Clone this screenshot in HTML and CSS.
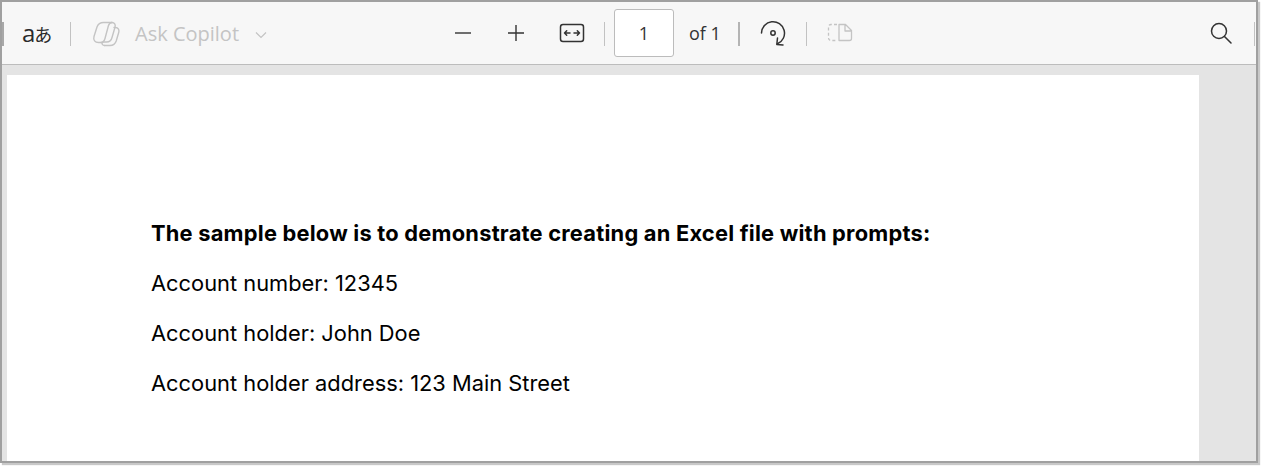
FILE: index.html
```html
<!DOCTYPE html>
<html lang="en">
<head>
<meta charset="utf-8">
<title>PDF viewer</title>
<link rel="stylesheet" href="styles.css">
</head>
<body>
<div class="frame">
  <header class="toolbar">
    <span class="edge"></span>
    <span class="translate"><span class="latin">a</span>あ</span>
    <span class="sep sep-a"></span>
    <svg class="copilot" width="28" height="26" viewBox="0 0 28 26" fill="none" stroke="#c4c4c4" stroke-width="1.4" stroke-linejoin="round" stroke-linecap="round">
      <path d="M20 1.500H11.500C8.300 1.500 6 3.200 5 6L2 15.500C1 19 3 21.500 6.500 21.500H10.500"/>
      <path d="M22 6.500H23.500C26 6.500 27.500 8.800 26.700 11.500L24.200 20C23.200 23 21 24.500 18 24.500H12.500"/>
      <path d="M20 1.500C18.500 1.500 17 2.800 16.400 4.800L13 17.500C12.300 20 10.800 21.500 9 21.500"/>
      <path d="M20 1.500C22.500 1.500 23.800 3.700 23 6.200L20 16.500C19.300 19.500 17.500 21 14.500 21H11"/>
      <path d="M12.500 24.500C10.800 24.500 9.800 23.200 10 21.500"/>
    </svg>
    <span class="ask">Ask Copilot</span>
    <svg class="chev" width="12" height="8" viewBox="0 0 12 8" fill="none" stroke="#c4c4c4" stroke-width="1.200"><path d="M1 1.500l5 5 5-5"/></svg>
    <svg class="minus" width="18" height="18" viewBox="0 0 18 18" fill="none" stroke="#333" stroke-width="1.400"><path d="M1 9h16"/></svg>
    <svg class="plus" width="18" height="18" viewBox="0 0 18 18" fill="none" stroke="#333" stroke-width="1.400"><path d="M1 9h16M9 1v16"/></svg>
    <svg class="fit" width="26" height="20" viewBox="0 0 26 20" fill="none" stroke="#333" stroke-width="1.500" stroke-linecap="round" stroke-linejoin="round">
      <rect x="1.500" y="1.500" width="23" height="17" rx="2.500"/>
      <path d="M5.500 10h5.500M7.700 7.800L5.500 10l2.200 2.200M15 10h5.500M18.300 7.800l2.200 2.200-2.200 2.200"/>
    </svg>
    <span class="sep sep-b"></span>
    <span class="page-input">1</span>
    <span class="page-of">of 1</span>
    <span class="sep-dark"></span>
    <svg class="rotate" width="26" height="26" viewBox="0 0 26 26" fill="none" stroke="#333" stroke-width="1.500" stroke-linecap="round" stroke-linejoin="round">
      <path d="M1.500 13A11.500 11.500 0 1 1 17.500 23.800"/>
      <path d="M17.500 18L16.800 24.500L23 25"/>
      <circle cx="13" cy="13" r="2.200"/>
    </svg>
    <span class="sep sep-c"></span>
    <svg class="split" width="26" height="22" viewBox="0 0 26 22" fill="none" stroke="#c4c4c4" stroke-width="1.300" stroke-linejoin="round">
      <path d="M10 2.500H4a2.500 2.500 0 0 0-2.500 2.500v11A2.500 2.500 0 0 0 4 18.500h6" stroke-dasharray="3 2.200"/>
      <path d="M12 2.500h6.500l6 6v8a2 2 0 0 1-2 2H12zM18 2.500v6.500h6.500"/>
    </svg>
    <svg class="search" width="24" height="24" viewBox="0 0 24 24" fill="none" stroke="#333" stroke-width="1.500" stroke-linecap="round"><circle cx="11" cy="10" r="7.500"/><path d="M16.500 15.500l6.500 6.500"/></svg>
    <span class="edge-right"></span>
  </header>
  <main class="viewer">
    <article class="page">
      <p class="heading">The sample below is to demonstrate creating an Excel file with prompts:</p>
      <p>Account number: 12345</p>
      <p>Account holder: John Doe</p>
      <p>Account holder address: 123 Main Street</p>
    </article>
  </main>
</div>
</body>
</html>
```
FILE: styles.css
```css
* { box-sizing: border-box; }
html, body { margin: 0; height: 100%; background: #fff; overflow: hidden; }
.frame {
  width: 1258px;
  height: 463px;
  border: 2px solid #a0a0a0;
  background: #e4e4e4;
  box-shadow: 2px 2px 1px #c8c8c8;
  display: flex;
  flex-direction: column;
  overflow: hidden;
}
.toolbar {
  flex: none;
  height: 63px;
  background: #f7f7f7;
  border-bottom: 1px solid #bcbcbc;
  display: flex;
  align-items: center;
  font-family: "Open Sans", "Noto Sans", sans-serif;
}
.toolbar > * { flex: none; }
.toolbar svg { display: block; }
.edge { width: 2px; height: 24px; background: #a8a8a8; margin-top: 2px; }
.translate {
  margin-left: 18px;
  width: 30px;
  font: 18px/26px "Noto Sans CJK JP", "Noto Sans", sans-serif;
  letter-spacing: -2px;
  color: #2a2a2a;
  white-space: nowrap;
}
.latin { font: 24px/26px "Open Sans", sans-serif; letter-spacing: -1px; }
.sep { width: 1px; height: 24px; background: #c2c2c2; margin-top: 2px; }
.sep-a { margin-left: 18px; }
.copilot { margin-left: 21px; margin-top: 2px; }
.ask { margin-left: 15px; width: 106px; font-size: 20px; color: #c4c4c4; white-space: nowrap; }
.chev { margin-left: 14px; margin-top: 3px; }
.minus { margin-left: 187px; }
.plus { margin-left: 35px; }
.fit { margin-left: 34px; }
.sep-b { margin-left: 19px; }
.page-input {
  margin-left: 9px;
  width: 60px;
  height: 48px;
  background: #fff;
  border: 1px solid #bcbcbc;
  border-radius: 3px;
  display: flex;
  align-items: center;
  justify-content: center;
  font-size: 18px;
  color: #333;
}
.page-of { margin-left: 15px; width: 32px; font-size: 18px; color: #333; white-space: nowrap; }
.sep-dark { margin-left: 17px; width: 2px; height: 24px; background: #b4b4b4; margin-top: 2px; }
.rotate { margin-left: 20px; }
.sep-c { margin-left: 20px; }
.split { margin-left: 20px; }
.search { margin-left: 355px; }
.edge-right { margin-left: 22px; width: 1px; height: 24px; background: #c2c2c2; margin-top: 2px; }
.viewer {
  flex: 1;
  min-height: 0;
  padding: 10px 0 0 5px;
}
.page {
  width: 1192px;
  height: 400px;
  background: #fff;
  padding: 133px 0 0 144px;
  font: 21.85px/50px "Inter", sans-serif;
  color: #000;
}
.page p { margin: 0; white-space: nowrap; }
.page .heading { font-weight: 700; letter-spacing: 0.22px; }
```
